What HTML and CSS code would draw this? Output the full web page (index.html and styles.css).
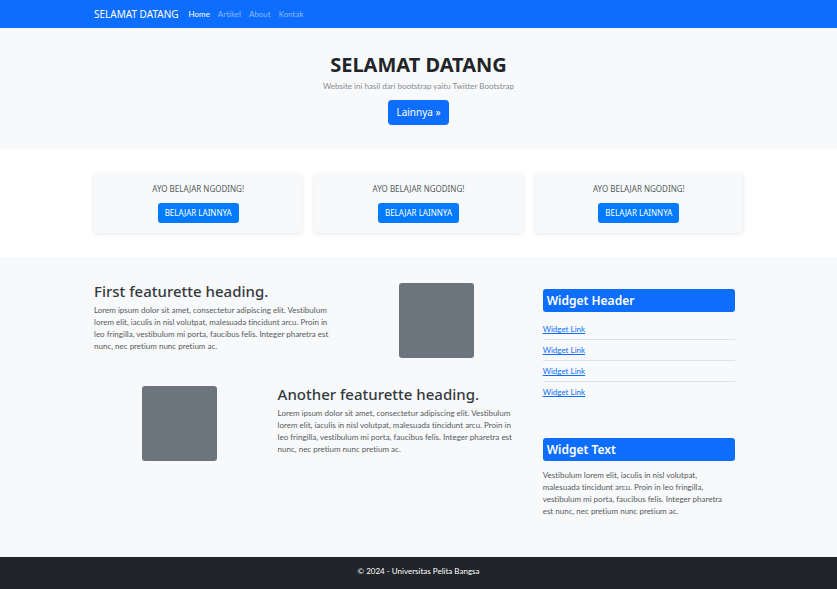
FILE: index.html
```html
<!DOCTYPE html>
<html lang="id">
<head>
<meta charset="utf-8">
<meta name="viewport" content="width=device-width, initial-scale=1">
<title>Selamat Datang</title>
<link rel="stylesheet" href="styles.css">
</head>
<body>
<nav class="navbar">
  <div class="container navbar-inner">
    <a class="brand" href="#">SELAMAT DATANG</a>
    <ul class="nav-list">
      <li><a class="nav-link active" href="#">Home</a></li>
      <li><a class="nav-link" href="#">Artikel</a></li>
      <li><a class="nav-link" href="#">About</a></li>
      <li><a class="nav-link" href="#">Kontak</a></li>
    </ul>
  </div>
</nav>

<header class="hero">
  <h1>SELAMAT DATANG</h1>
  <p>Website ini hasil dari bootstrap yaitu Twitter Bootstrap</p>
  <a class="btn btn-large" href="#">Lainnya »</a>
</header>

<section class="promo">
  <div class="container cards">
    <div class="card">
      <p>AYO BELAJAR NGODING!</p>
      <a class="btn btn-card" href="#">BELAJAR LAINNYA</a>
    </div>
    <div class="card">
      <p>AYO BELAJAR NGODING!</p>
      <a class="btn btn-card" href="#">BELAJAR LAINNYA</a>
    </div>
    <div class="card">
      <p>AYO BELAJAR NGODING!</p>
      <a class="btn btn-card" href="#">BELAJAR LAINNYA</a>
    </div>
  </div>
</section>

<div class="content">
  <div class="container columns">
    <main class="features">
      <section class="feature">
        <div class="feature-text">
          <h2>First featurette heading.</h2>
          <p>Lorem ipsum dolor sit amet, consectetur adipiscing elit. Vestibulum lorem elit, iaculis in nisl volutpat, malesuada tincidunt arcu. Proin in leo fringilla, vestibulum mi porta, faucibus felis. Integer pharetra est nunc, nec pretium nunc pretium ac.</p>
        </div>
        <div class="thumb"></div>
      </section>
      <section class="feature">
        <div class="thumb"></div>
        <div class="feature-text">
          <h2>Another featurette heading.</h2>
          <p>Lorem ipsum dolor sit amet, consectetur adipiscing elit. Vestibulum lorem elit, iaculis in nisl volutpat, malesuada tincidunt arcu. Proin in leo fringilla, vestibulum mi porta, faucibus felis. Integer pharetra est nunc, nec pretium nunc pretium ac.</p>
        </div>
      </section>
    </main>
    <aside class="sidebar">
      <section class="widget">
        <h3>Widget Header</h3>
        <ul class="widget-links">
          <li><a href="#">Widget Link</a></li>
          <li><a href="#">Widget Link</a></li>
          <li><a href="#">Widget Link</a></li>
          <li><a href="#">Widget Link</a></li>
        </ul>
      </section>
      <section class="widget">
        <h3>Widget Text</h3>
        <p>Vestibulum lorem elit, iaculis in nisl volutpat, malesuada tincidunt arcu. Proin in leo fringilla, vestibulum mi porta, faucibus felis. Integer pharetra est nunc, nec pretium nunc pretium ac.</p>
      </section>
    </aside>
  </div>
</div>

<footer class="footer">
  <p>© 2024 - Universitas Pelita Bangsa</p>
</footer>
</body>
</html>
```
FILE: styles.css
```css
* {
  box-sizing: border-box;
}

body,
h1,
h2,
h3,
p,
ul {
  margin: 0;
  padding: 0;
}

body {
  background: #f8f9fa;
  color: #212529;
  font: 8px/12px "Segoe UI", Lato, "Noto Sans", sans-serif;
  font-variant-ligatures: none;
}

h1,
h2,
h3,
.brand,
.btn,
.card {
  font-family: "Segoe UI", "Noto Sans", sans-serif;
}

ul {
  list-style: none;
}

.container {
  max-width: 661px;
  margin: 0 auto;
  padding: 0 6px;
}

.navbar {
  background: #0d6efd;
}

.navbar-inner {
  display: flex;
  align-items: center;
  gap: 10px;
  min-height: 28px;
}

.brand {
  color: #fff;
  font-size: 10px;
  text-decoration: none;
}

.nav-list {
  display: flex;
  gap: 8px;
}

.nav-link {
  color: rgba(255, 255, 255, 0.5);
  text-decoration: none;
}

.nav-link.active {
  color: #fff;
}

.hero {
  padding: 25px 12px 24px;
  text-align: center;
}

.hero h1 {
  font-size: 20px;
  font-weight: 700;
  line-height: 24px;
  margin-bottom: 3px;
}

.hero p {
  color: #868a8e;
  margin-bottom: 8px;
}

.btn {
  display: inline-block;
  border-radius: 4px;
  color: #fff;
  text-decoration: none;
}

.btn-large {
  background: #0d6efd;
  font-size: 10px;
  line-height: 15px;
  padding: 5px 8px;
}

.promo {
  background: #fff;
  padding: 24px 0;
}

.cards {
  display: grid;
  grid-template-columns: repeat(3, 1fr);
  gap: 12px;
}

.card {
  background: #f8f9fa;
  border-radius: 4px;
  box-shadow: 0 1px 4px rgba(0, 0, 0, 0.1);
  padding: 10px;
  text-align: center;
}

.card p {
  color: #55595c;
  margin-bottom: 8px;
}

.btn-card {
  background: #007bff;
  border-radius: 3px;
  padding: 4px 7px;
}

.content {
  padding: 26px 0 40px;
}

.columns,
.feature {
  display: grid;
  grid-template-columns: repeat(12, minmax(0, 1fr));
  column-gap: 12px;
}

.features {
  grid-column: span 8;
  display: flex;
  flex-direction: column;
  gap: 28px;
}

.feature-text {
  grid-column: span 7;
}

.feature h2 {
  color: #343a40;
  font-size: 15px;
  font-weight: 500;
  line-height: 16px;
  margin-bottom: 5px;
}

.feature p,
.widget p {
  color: #55595c;
}

.thumb {
  grid-column: span 5;
  width: 75px;
  height: 75px;
  background: #6c757d;
  border-radius: 3px;
  justify-self: center;
}

.sidebar {
  grid-column: span 4;
  display: flex;
  flex-direction: column;
  gap: 36px;
  padding: 6px 8px 0;
}

.widget h3 {
  background: #0d6efd;
  border-radius: 3px;
  color: #fff;
  font-size: 12px;
  font-weight: 600;
  line-height: 15px;
  padding: 4px;
  margin-bottom: 7px;
}

.widget p {
  margin-top: 8px;
  padding-right: 4px;
}

.widget-links li {
  padding: 4px 0;
}

.widget-links li + li {
  border-top: 1px solid #dee2e6;
}

.widget-links a {
  color: #0d6efd;
}

.footer {
  background: #212529;
  color: #fff;
  padding: 8px 12px 12px;
  text-align: center;
}
```
